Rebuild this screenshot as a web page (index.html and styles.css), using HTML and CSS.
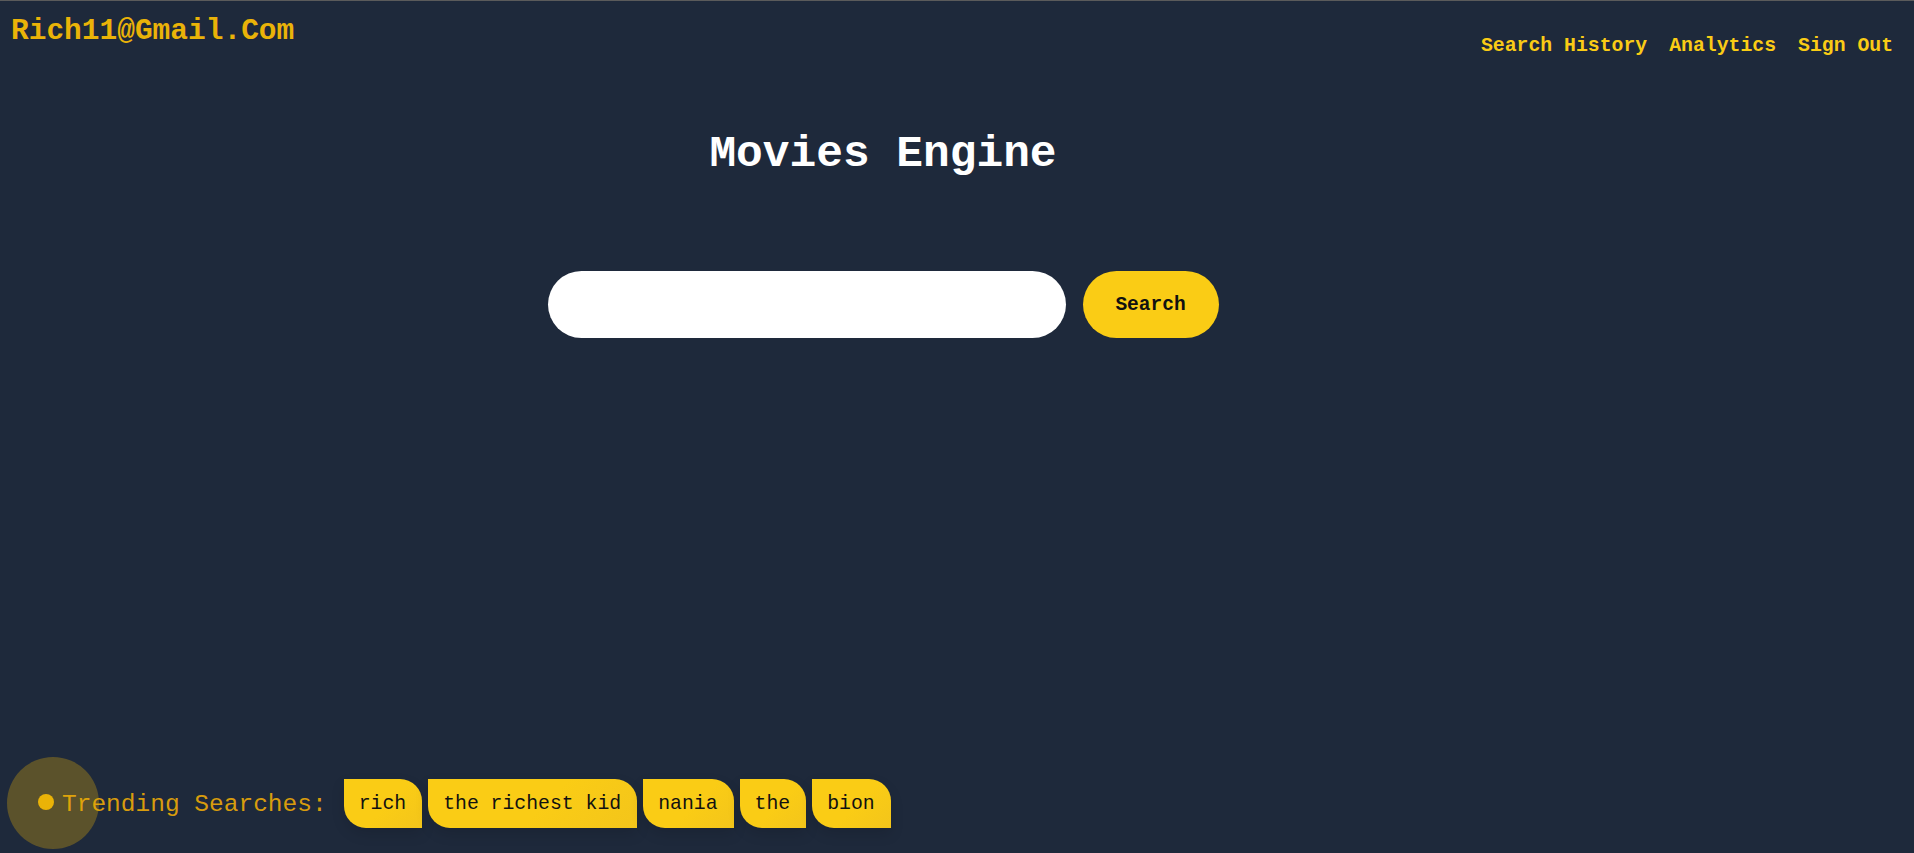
FILE: index.html
```html
<!DOCTYPE html>
<html lang="en">
<head>
<meta charset="utf-8">
<title>Movies Engine</title>
<link rel="stylesheet" href="styles.css">
</head>
<body>
<div class="page">
  <header class="topbar">
    <div class="user">Rich11@Gmail.Com</div>
    <nav class="nav">
      <a href="#">Search History</a>
      <a href="#">Analytics</a>
      <a href="#">Sign Out</a>
    </nav>
  </header>
  <main class="hero">
    <h1 class="title">Movies Engine</h1>
    <form class="search">
      <input class="search-input" type="text">
      <button class="search-btn" type="button">Search</button>
    </form>
  </main>
  <footer class="trending">
    <span class="dot"></span>
    <span class="trending-label">Trending Searches:</span>
    <div class="tags">
      <span class="tag">rich</span>
      <span class="tag">the richest kid</span>
      <span class="tag">nania</span>
      <span class="tag">the</span>
      <span class="tag">bion</span>
    </div>
  </footer>
</div>
</body>
</html>
```

FILE: styles.css
```css
* { box-sizing: border-box; }
html, body { margin: 0; padding: 0; background: #1e293b; }
body { font-family: "Liberation Mono", "DejaVu Sans Mono", monospace; }
.page {
  height: 853px;
  border-top: 1px solid #5b5b5b;
  display: flex;
  flex-direction: column;
  overflow: hidden;
}
.topbar {
  display: flex;
  justify-content: space-between;
  align-items: flex-start;
  padding: 0 21px 0 11px;
}
.user {
  color: #eab308;
  font-weight: bold;
  font-size: 29.5px;
  line-height: 30px;
  margin-top: 15px;
}
.nav {
  display: flex;
  gap: 22px;
  margin-top: 35px;
}
.nav a {
  color: #facc15;
  font-weight: bold;
  font-size: 19.8px;
  line-height: 20px;
  text-decoration: none;
}
.hero {
  flex: 1;
  display: flex;
  flex-direction: column;
  align-items: center;
  padding-right: 148px;
}
.title {
  margin: 75px 0 0 0;
  color: #ffffff;
  font-size: 44.5px;
  line-height: 46px;
  font-weight: bold;
}
.search {
  display: flex;
  gap: 17px;
  margin-top: 94px;
}
.search-input {
  width: 518px;
  height: 67px;
  border: none;
  border-radius: 34px;
  background: #ffffff;
  outline: none;
  padding: 0 24px;
  font-family: inherit;
  font-size: 18px;
}
.search-btn {
  width: 136px;
  height: 67px;
  border: none;
  border-radius: 34px;
  background: #facc15;
  color: #111111;
  font-family: inherit;
  font-weight: bold;
  font-size: 19.5px;
  padding: 0;
}
.trending {
  display: flex;
  align-items: center;
  padding: 0 0 25px 38px;
}
.dot {
  position: relative;
  width: 16px;
  height: 16px;
  border-radius: 50%;
  background: #eab308;
  margin-top: -3px;
}
.dot::before {
  content: "";
  position: absolute;
  width: 92px;
  height: 92px;
  left: -31px;
  top: -37px;
  border-radius: 50%;
  background: rgba(234, 179, 8, 0.3);
}
.trending-label {
  color: #d89c0d;
  font-size: 24.5px;
  line-height: 24px;
  margin-left: 8px;
  margin-top: 2px;
}
.tags {
  display: flex;
  gap: 6px;
  margin-left: 17px;
}
.tag {
  display: flex;
  align-items: center;
  height: 49px;
  padding: 0 16px 0 15px;
  background: linear-gradient(135deg, #facc15 0%, #facc15 55%, #f3c51b 100%);
  color: #111111;
  font-size: 19.8px;
  border-radius: 0 22px 0 22px;
  box-shadow: 0 6px 14px rgba(0, 0, 0, 0.12);
}
```
